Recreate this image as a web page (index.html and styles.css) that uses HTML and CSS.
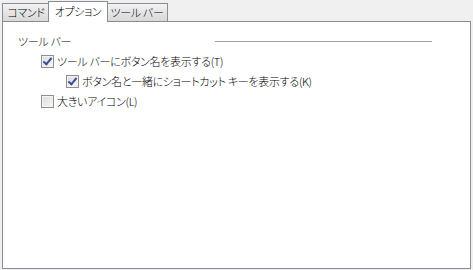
FILE: index.html
```html
<!doctype html>
<html lang="ja">
<head>
	<meta charset="UTF-8">
	<title>オプション</title>
	<link rel="stylesheet" href="styles.css">
</head>
<body>
	<div class="dialog">
		<!-- タブ -->
		<div class="tabs">
			<div class="tab tab-cmd">コマンド</div>
			<div class="tab tab-opt active">オプション</div>
			<div class="tab tab-bar">ツール バー</div>
		</div>
		<!-- タブ内容 -->
		<div class="panel">
			<div class="group-title">
				<span>ツール バー</span>
				<span class="rule"></span>
			</div>
			<div class="option">
				<span class="check on"></span>
				<span>ツール バーにボタン名を表示する(T)</span>
			</div>
			<div class="option sub">
				<span class="check on"></span>
				<span>ボタン名と一緒にショートカット キーを表示する(K)</span>
			</div>
			<div class="option">
				<span class="check"></span>
				<span>大きいアイコン(L)</span>
			</div>
		</div>
	</div>
</body>
</html>
```

FILE: styles.css
```css
* {
	margin: 0px;
	padding: 0px;
	box-sizing: border-box;
}

body {
	width: 473px;
	height: 270px;
	background: #f0f0f0;
	font-family: "Noto Sans CJK JP", "Noto Sans", sans-serif;
	font-size: 11px;
	font-weight: 300;
	letter-spacing: -0.3px;
	font-feature-settings: "palt";
	color: #000;
	overflow: hidden;
}

.dialog {
	display: flex;
	flex-direction: column;
	height: 269px;
	padding: 0px 2px;
}

.tabs {
	display: flex;
	align-items: flex-end;
	height: 21px;
	position: relative;
	z-index: 1;
}

.tab {
	height: 18px;
	line-height: 16px;
	text-align: center;
	border: 1px solid #898c95;
	border-bottom: none;
	background: linear-gradient(#f3f3f3, #e4e4e4 50%, #d9d9d9);
	margin-right: -1px;
}

.tab-cmd {
	width: 48px;
}

.tab-opt {
	width: 60px;
}

.tab-bar {
	width: 62px;
}

.tab.active {
	height: 21px;
	line-height: 19px;
	background: #fff;
	margin-left: -1px;
	margin-right: -2px;
	margin-bottom: -1px;
	position: relative;
}

.panel {
	flex: 1;
	background: #fff;
	border: 1px solid #898c95;
	padding: 12px 0px 0px 15px;
}

.group-title {
	display: flex;
	align-items: center;
	width: 414px;
	height: 14px;
	line-height: 14px;
}

.group-title .rule {
	margin-left: auto;
	width: 217px;
	border-top: 1px solid #a0a0a0;
	margin-top: 1px;
}

.option {
	display: flex;
	align-items: center;
	height: 20px;
	padding-left: 23px;
	gap: 3px;
}

.group-title + .option {
	margin-top: 3px;
}

.option.sub {
	padding-left: 48px;
}

.check {
	width: 13px;
	height: 13px;
	border: 1px solid #8f8f8f;
	background: linear-gradient(135deg, #dcdcdc, #f6f6f6);
	box-shadow: inset 0px 0px 0px 1px #f4f4f4;
	position: relative;
}

.check.on::after {
	content: "";
	position: absolute;
	left: 3px;
	top: 0px;
	width: 3px;
	height: 7px;
	border-right: 2px solid #3c4f9a;
	border-bottom: 2px solid #3c4f9a;
	transform: rotate(40deg);
}
```
